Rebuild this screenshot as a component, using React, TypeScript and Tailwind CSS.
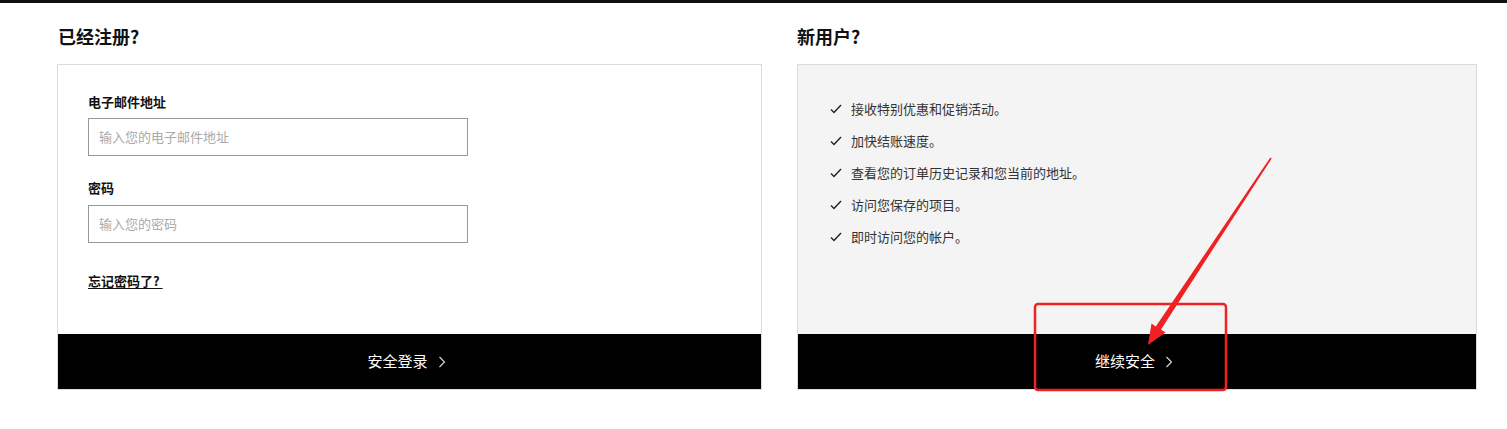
import React from "react";

const FONT = { fontFamily: '"Noto Sans CJK SC", "Liberation Sans", sans-serif' };

const benefits = [
  "接收特别优惠和促销活动。",
  "加快结账速度。",
  "查看您的订单历史记录和您当前的地址。",
  "访问您保存的项目。",
  "即时访问您的帐户。",
];

function Chevron() {
  return (
    <svg width="8" height="12" viewBox="0 0 8 12" className="ml-[10px]">
      <polyline points="1.5,1 6.5,6 1.5,11" fill="none" stroke="#ddd" strokeWidth="1.1" />
    </svg>
  );
}

function Tick() {
  return (
    <svg width="12" height="10" viewBox="0 0 12 10" className="shrink-0">
      <polyline points="1,5.5 4,8.5 11,1" fill="none" stroke="#222" strokeWidth="1.4" />
    </svg>
  );
}

function BlackButton({ label }: { label: string }) {
  return (
    <button className="h-[55px] w-full bg-black flex items-center justify-center pr-[6px] text-white text-[15px]">
      <span>{label}</span>
      <Chevron />
    </button>
  );
}

export default function App() {
  return (
    <div className="relative w-[1507px] h-[429px] bg-white overflow-hidden" style={FONT}>
      <div className="h-[3px] bg-[#111]" />

      <div className="flex pl-[57px] pt-[21px] gap-[35px]">
        {/* Sign in */}
        <div className="w-[705px] flex flex-col">
          <h2 className="pl-px text-[18px] leading-6 font-bold text-[#111] mb-4">已经注册?</h2>
          <div className="h-[326px] border border-[#dcdcdc] flex flex-col">
            <div className="flex-1 pl-[30px] pt-[27px]">
              <label className="block text-[13px] leading-5 font-bold text-[#111] mb-[6px]">电子邮件地址</label>
              <input
                placeholder="输入您的电子邮件地址"
                className="w-[380px] h-[38px] border border-[#999] px-[10px] pb-[2px] text-[13px] placeholder:text-[#aaa] outline-none"
                style={FONT}
              />
              <label className="block mt-[22px] text-[13px] leading-5 font-bold text-[#111] mb-[7px]">密码</label>
              <input
                type="password"
                placeholder="输入您的密码"
                className="w-[380px] h-[38px] border border-[#999] px-[10px] pb-[2px] text-[13px] placeholder:text-[#aaa] outline-none"
                style={FONT}
              />
              <a className="block mt-7 w-fit text-[13px] leading-5 font-bold text-[#111] underline underline-offset-2">
                忘记密码了?&nbsp;
              </a>
            </div>
            <BlackButton label="安全登录" />
          </div>
        </div>

        {/* New user */}
        <div className="w-[680px] flex flex-col">
          <h2 className="text-[18px] leading-6 font-bold text-[#111] mb-4">新用户?</h2>
          <div className="h-[326px] border border-[#dcdcdc] bg-[#f4f4f4] flex flex-col">
            <ul className="flex-1 pl-[32px] pt-[28px]">
              {benefits.map((b) => (
                <li key={b} className="flex items-center gap-[9px] leading-[32px] text-[13px] text-[#333]">
                  <Tick />
                  <span>{b}</span>
                </li>
              ))}
            </ul>
            <BlackButton label="继续安全" />
          </div>
        </div>
      </div>

      {/* red annotation */}
      <svg className="absolute inset-0 pointer-events-none" width="1507" height="429">
        <rect x="1035" y="304" width="191" height="86" rx="3" fill="none" stroke="#ee2222" strokeWidth="2.5" />
        <polygon
          points="1271.7,158.4 1161,329.4 1165.5,332.5 1148,345 1151.5,323.5 1155.8,326.6 1270.3,157.6"
          fill="#ee2222"
        />
      </svg>
    </div>
  );
}
